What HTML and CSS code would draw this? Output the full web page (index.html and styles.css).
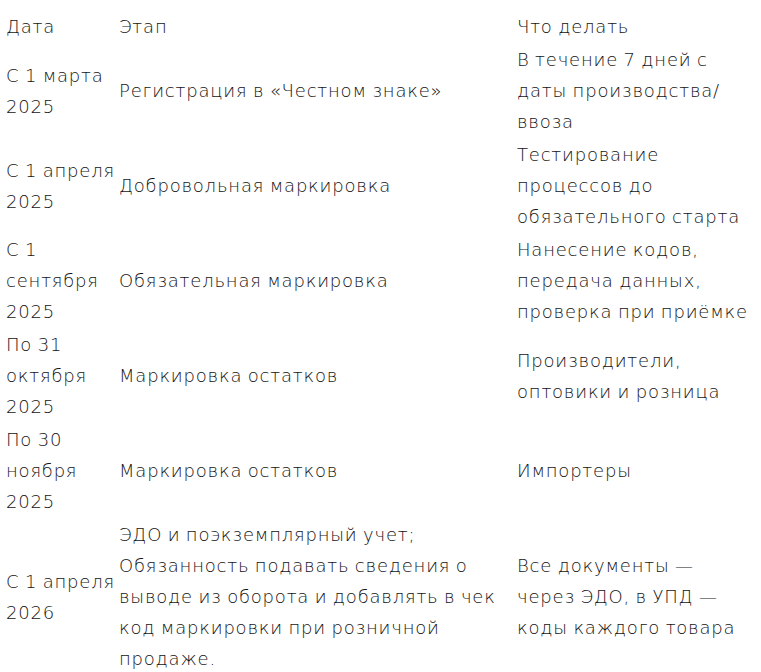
FILE: index.html
```html
<!DOCTYPE html>
<html lang="ru">
<head>
<meta charset="utf-8">
<title>Сроки маркировки</title>
<link rel="stylesheet" href="styles.css">
</head>
<body>
<table class="schedule">
  <colgroup>
    <col class="col-date">
    <col class="col-stage">
    <col class="col-todo">
  </colgroup>
  <thead>
    <tr><th>Дата</th><th>Этап</th><th>Что делать</th></tr>
  </thead>
  <tbody>
    <tr>
      <td>С 1 марта 2025</td>
      <td>Регистрация в «Честном знаке»</td>
      <td>В течение 7 дней с даты производства/ ввоза</td>
    </tr>
    <tr>
      <td>С 1 апреля 2025</td>
      <td>Добровольная маркировка</td>
      <td>Тестирование процессов до обязательного старта</td>
    </tr>
    <tr>
      <td>С 1 сентября 2025</td>
      <td>Обязательная маркировка</td>
      <td>Нанесение кодов, передача данных, проверка при приёмке</td>
    </tr>
    <tr>
      <td>По 31 октября 2025</td>
      <td>Маркировка остатков</td>
      <td>Производители, оптовики и розница</td>
    </tr>
    <tr>
      <td>По 30 ноября 2025</td>
      <td>Маркировка остатков</td>
      <td>Импортеры</td>
    </tr>
    <tr>
      <td>С 1 апреля 2026</td>
      <td>ЭДО и поэкземплярный учет; Обязанность подавать сведения о выводе из оборота и добавлять в чек код маркировки при розничной продаже.</td>
      <td>Все документы — через ЭДО, в УПД — коды каждого товара</td>
    </tr>
  </tbody>
</table>
</body>
</html>
```
FILE: styles.css
```css
html, body {
  overflow: hidden;
}
body {
  margin: 9px 0 0 4px;
  background: #ffffff;
  color: #141414;
  font-family: "DejaVu Sans", sans-serif;
  font-weight: 200;
  font-size: 18px;
  line-height: 31px;
  letter-spacing: 0.8px;
  word-spacing: -1px;
}
.schedule {
  border-collapse: separate;
  border-spacing: 2px;
  table-layout: fixed;
  width: 750px;
}
.schedule th,
.schedule td {
  padding: 0;
  text-align: left;
  vertical-align: middle;
  font-weight: 200;
}
.col-date { width: 111px; }
.col-stage { width: 396px; }
.col-todo { width: 235px; }
```
